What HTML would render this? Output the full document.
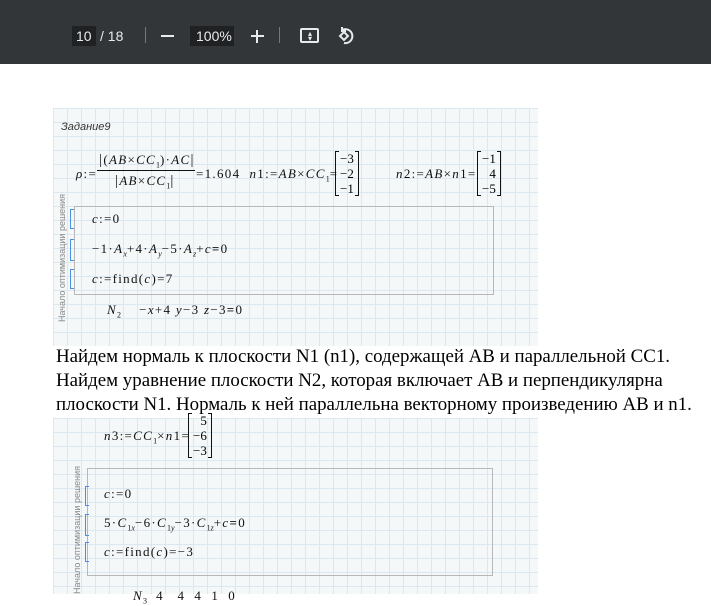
<!DOCTYPE html>
<html><head><meta charset="utf-8"><style>
*{margin:0;padding:0;box-sizing:border-box}
body{width:711px;height:594px;overflow:hidden;background:#fff;position:relative;font-family:"Liberation Serif",serif}
.tb{position:absolute;left:0;top:0;width:711px;height:64px;background:#323639;color:#e8eaed;font-family:"Liberation Sans",sans-serif;font-size:13px}
.tb div{position:absolute}
.img{position:absolute;left:53px;width:485px;background-color:#f5f8f9;background-image:linear-gradient(#dce8f1 1px,transparent 1px),linear-gradient(90deg,#dce8f1 1px,transparent 1px);background-size:14px 14px}
.m{position:absolute;font-size:13px;letter-spacing:1.3px;white-space:nowrap;color:#111}
i{font-style:italic}
.box{position:absolute;border:1px solid #b8b8b8}
.br{position:absolute;width:4px;border:1px solid #4a90e2;border-right:none}
.vt{position:absolute;font-family:"Liberation Sans",sans-serif;font-size:9px;color:#888;transform:rotate(-90deg);transform-origin:left top;white-space:nowrap}
.mat{position:absolute;border-left:1px solid #111;border-right:1px solid #111;font-size:13px;text-align:right;line-height:15px;padding:0 4px}
.mat:before,.mat:after{content:"";position:absolute;top:0;bottom:0;width:3px;border-top:1px solid #111;border-bottom:1px solid #111}
.mat:before{left:0}.mat:after{right:0}
.p{position:absolute;left:56px;font-size:18.9px;color:#000;white-space:nowrap}
sub{font-size:8px;letter-spacing:0}
</style></head><body>
<div class="tb">
<div style="left:72px;top:26px;width:24px;height:20px;background:#1f2123"></div>
<div style="left:76px;top:28px;font-size:14px">10</div>
<div style="left:100px;top:28px;font-size:14px">/&nbsp;18</div>
<div style="left:145px;top:27px;width:1px;height:16px;background:#777"></div>
<div style="left:161px;top:35px;width:13px;height:2px;background:#e8eaed"></div>
<div style="left:190px;top:26px;width:44px;height:20px;background:#1f2123"></div>
<div style="left:196px;top:28px;font-size:14px">100%</div>
<div style="left:251px;top:35px;width:13px;height:2px;background:#e8eaed"></div>
<div style="left:256px;top:30px;width:2px;height:13px;background:#e8eaed"></div>
<div style="left:279px;top:27px;width:1px;height:16px;background:#777"></div>
<div style="left:300px;top:28px;width:19px;height:15px;border:2px solid #e8eaed;border-radius:2px"></div>
<div style="left:308px;top:31px;font-size:8px;line-height:5px">▴<br>▾</div>
<svg style="position:absolute;left:336px;top:26px" width="20" height="20" viewBox="0 0 20 20" fill="none" stroke="#e8eaed" stroke-width="2"><path d="M6 4 A7 7 0 1 1 8 17"/><path d="M4 10 L8 6 L12 10 L8 14 Z"/><path d="M6 1 L6 5 L10 5"/></svg>
</div>

<div class="img" style="top:108px;height:238px"></div>
<div class="m" style="left:61px;top:121px;font-family:'Liberation Sans',sans-serif;font-style:italic;font-size:11px;letter-spacing:0;color:#333">Задание9</div>
<div class="m" style="left:76px;top:166px"><i>ρ</i>:=</div>
<div class="m" style="left:99px;top:152px"><span style="font-size:15px">|</span>(<i>AB</i>×<i>CC</i><sub>1</sub>)·<i>AC</i><span style="font-size:15px">|</span></div>
<div style="position:absolute;left:97px;top:170px;width:98px;height:1px;background:#111"></div>
<div class="m" style="left:115px;top:173px"><span style="font-size:15px">|</span><i>AB</i>×<i>CC</i><sub>1</sub><span style="font-size:15px">|</span></div>
<div class="m" style="left:196px;top:166px">=1.604 &nbsp;<i>n</i>1:=<i>AB</i>×<i>CC</i><sub>1</sub>=</div>
<div class="m" style="left:396px;top:166px"><i>n</i>2:=<i>AB</i>×<i>n</i>1=</div>
<div class="mat" style="left:335px;top:151px;height:45px">−3<br>−2<br>−1</div>
<div class="mat" style="left:477px;top:151px;height:45px">−1<br>4<br>−5</div>
<div class="box" style="left:74px;top:206px;width:420px;height:89px"></div>
<div class="br" style="left:70px;top:209px;height:20px"></div>
<div class="br" style="left:70px;top:239px;height:22px"></div>
<div class="br" style="left:70px;top:269px;height:20px"></div>
<div class="vt" style="left:57px;top:322px">Начало оптимизации решения</div>
<div class="m" style="left:92px;top:211px"><i>c</i>:=0</div>
<div class="m" style="left:92px;top:241px">−1·<i>A<sub>x</sub></i>+4·<i>A<sub>y</sub></i>−5·<i>A<sub>z</sub></i>+<i>c</i><b>=</b>0</div>
<div class="m" style="left:92px;top:271px"><i>c</i>:=find(<i>c</i>)=7</div>
<div class="m" style="left:107px;top:302px"><i>N</i><sub>2</sub> &nbsp;&nbsp;&nbsp;−<i>x</i>+4 <i>y</i>−3 <i>z</i>−3<b>=</b>0</div>

<div class="p" style="top:346px">Найдем нормаль к плоскости N1 (n1), содержащей AB и параллельной CC1.</div>
<div class="p" style="top:370px">Найдем уравнение плоскости N2, которая включает AB и перпендикулярна</div>
<div class="p" style="top:394px">плоскости N1. Нормаль к ней параллельна векторному произведению AB и n1.</div>

<div class="img" style="top:418px;height:176px"></div>
<div class="m" style="left:104px;top:428px"><i>n</i>3:=<i>CC</i><sub>1</sub>×<i>n</i>1=</div>
<div class="mat" style="left:188px;top:413px;height:45px">5<br>−6<br>−3</div>
<div class="box" style="left:87px;top:468px;width:406px;height:108px"></div>
<div class="br" style="left:85px;top:486px;height:20px"></div>
<div class="br" style="left:85px;top:514px;height:22px"></div>
<div class="br" style="left:85px;top:542px;height:20px"></div>
<div class="vt" style="left:72px;top:594px">Начало оптимизации решения</div>
<div class="m" style="left:104px;top:486px"><i>c</i>:=0</div>
<div class="m" style="left:104px;top:515px">5·<i>C</i><sub>1<i>x</i></sub>−6·<i>C</i><sub>1<i>y</i></sub>−3·<i>C</i><sub>1<i>z</i></sub>+<i>c</i><b>=</b>0</div>
<div class="m" style="left:104px;top:544px"><i>c</i>:=find(<i>c</i>)=−3</div>
<div class="m" style="left:133px;top:588px"><i>N</i><sub>3</sub> &nbsp;4 &nbsp;&nbsp;4 &nbsp;4 &nbsp;1 &nbsp;0</div>
</body></html>
